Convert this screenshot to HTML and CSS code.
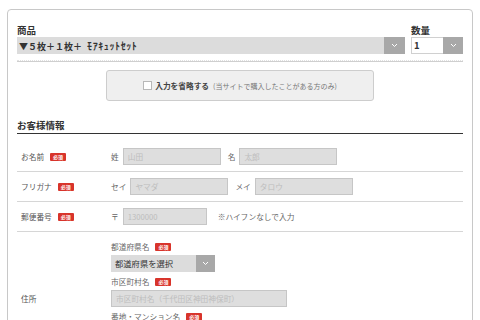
FILE: index.html
```html
<!DOCTYPE html>
<html lang="ja">
<head>
    <meta charset="utf-8">
    <title>ご注文フォーム</title>
    <link rel="stylesheet" href="styles.css">
</head>
<body>
    <div class="order-form">
        <!-- 商品・数量 -->
        <div class="item-row">
            <div class="item-col">
                <div class="field-title">商品</div>
                <div class="select-box">
                    <span class="select-text">▼５枚＋１枚＋ <span class="kana">ﾓｱｷｭｯﾄｾｯﾄ</span></span>
                    <span class="select-arrow">
                        <svg width="7" height="5" viewBox="0 0 7 5"><polyline points="1,1 3.5,3.5 6,1" fill="none" stroke="#fff" stroke-width="1"/></svg>
                    </span>
                </div>
            </div>
            <div class="qty-col">
                <div class="field-title">数量</div>
                <div class="select-box qty-box">
                    <span class="select-text">1</span>
                    <span class="select-arrow">
                        <svg width="7" height="5" viewBox="0 0 7 5"><polyline points="1,1 3.5,3.5 6,1" fill="none" stroke="#fff" stroke-width="1"/></svg>
                    </span>
                </div>
            </div>
        </div>
        <div class="item-rule"></div>

        <!-- 入力省略 -->
        <div class="skip-button">
            <span class="checkbox"></span>
            <span class="skip-text">入力を省略する</span>
            <span class="skip-note">(当サイトで購入したことがある方のみ)</span>
        </div>

        <!-- お客様情報 -->
        <h2 class="section-title">お客様情報</h2>

        <div class="form-row">
            <div class="row-label">お名前<span class="req">必須</span></div>
            <div class="row-fields">
                <span class="pair"><span class="mini-label">姓</span><input class="text-input" placeholder="山田"></span>
                <span class="pair"><span class="mini-label">名</span><input class="text-input" placeholder="太郎"></span>
            </div>
        </div>

        <div class="form-row">
            <div class="row-label">フリガナ<span class="req">必須</span></div>
            <div class="row-fields">
                <span class="pair"><span class="mini-label">セイ</span><input class="text-input" placeholder="ヤマダ"></span>
                <span class="pair"><span class="mini-label">メイ</span><input class="text-input" placeholder="タロウ"></span>
            </div>
        </div>

        <div class="form-row">
            <div class="row-label">郵便番号<span class="req">必須</span></div>
            <div class="row-fields">
                <span class="pair"><span class="mini-label">〒</span><input class="text-input zip-input" placeholder="1300000"></span>
                <span class="hint">※ハイフンなしで入力</span>
            </div>
        </div>

        <div class="form-row address-row">
            <div class="row-label">住所</div>
            <div class="address-fields">
                <div class="sub-field">
                    <div class="sub-label">都道府県名<span class="req">必須</span></div>
                    <div class="select-box pref-box">
                        <span class="select-text">都道府県を選択</span>
                        <span class="select-arrow">
                            <svg width="7" height="5" viewBox="0 0 7 5"><polyline points="1,1 3.5,3.5 6,1" fill="none" stroke="#fff" stroke-width="1"/></svg>
                        </span>
                    </div>
                </div>
                <div class="sub-field">
                    <div class="sub-label">市区町村名<span class="req">必須</span></div>
                    <input class="text-input city-input" placeholder="市区町村名（千代田区神田神保町）">
                </div>
                <div class="sub-field">
                    <div class="sub-label">番地・マンション名<span class="req">必須</span></div>
                    <input class="text-input city-input" placeholder="番地・マンション名">
                </div>
            </div>
        </div>
    </div>
</body>
</html>
```

FILE: styles.css
```css
/* Reset */
* {
    margin: 0;
    padding: 0;
    box-sizing: border-box;
}
body {
    font-family: "Noto Sans CJK JP", "Noto Sans", sans-serif;
    color: #555;
    background: #fff;
    overflow: hidden;
}
.order-form {
    margin: 9px 7px 0;
    border: 1px solid #c8c8c8;
    border-radius: 4px;
    padding: 14px 9px 40px;
}

/* 商品・数量 */
.item-row {
    display: flex;
    gap: 6px;
}
.item-col {
    flex: 1;
}
.qty-col {
    width: 52px;
}
.field-title {
    font-size: 9.5px;
    font-weight: bold;
    color: #333;
    line-height: 12px;
    margin-bottom: 1px;
}
.select-box {
    display: flex;
    height: 17px;
    background: #dcdcdc;
}
.select-text {
    flex: 1;
    font-size: 9px;
    font-weight: bold;
    color: #333;
    line-height: 17px;
    padding-left: 2px;
    white-space: nowrap;
}
.kana {
    margin-left: 3px;
    font-size: 10px;
    letter-spacing: 0.6px;
}
.select-arrow {
    width: 21px;
    background: #a8a8a8;
    display: flex;
    align-items: center;
    justify-content: center;
}
.qty-box {
    background: #fff;
    border: 1px solid #d0d0d0;
    border-right: none;
}
.qty-box .select-text {
    line-height: 15px;
    padding-left: 2px;
    font-size: 9.5px;
}
.qty-box .select-arrow {
    width: 20px;
    margin: -1px 0;
}
.item-rule {
    margin-top: 6px;
    height: 2px;
    border-top: 1px dotted #e2e2e2;
    border-bottom: 1px solid #cfcfcf;
}

/* 入力省略ボタン */
.skip-button {
    margin: 8px auto 0;
    width: 268px;
    height: 31px;
    background: #efefef;
    border: 1px solid #cdcdcd;
    border-radius: 3px;
    display: flex;
    align-items: center;
    justify-content: center;
}
.checkbox {
    width: 9px;
    height: 9px;
    background: #fff;
    border: 1px solid #b8b8b8;
    margin-right: 3px;
}
.skip-text {
    font-size: 7.7px;
    font-weight: bold;
    color: #444;
}
.skip-note {
    font-size: 7px;
    color: #777;
    margin-left: 4px;
}

/* お客様情報 */
.section-title {
    margin-top: 18px;
    font-size: 9.5px;
    font-weight: bold;
    color: #333;
    line-height: 12px;
    padding-bottom: 2px;
    border-bottom: 1px solid #333;
    margin-bottom: 8px;
}
.form-row {
    display: flex;
    align-items: center;
    padding: 6px 0;
    border-bottom: 1px solid #d6d6d6;
}
.row-label {
    width: 94px;
    padding-left: 4px;
    font-size: 7.7px;
    color: #555;
    display: flex;
    align-items: center;
}
.req {
    display: inline-block;
    width: 16px;
    height: 8px;
    margin-left: 6px;
    background: #d8342b;
    color: #fff;
    font-size: 5px;
    font-weight: bold;
    line-height: 8px;
    text-align: center;
    border-radius: 1px;
}
.row-fields {
    display: flex;
    align-items: center;
    gap: 7px;
}
.pair {
    display: flex;
    align-items: center;
    gap: 4px;
}
.mini-label {
    font-size: 7.7px;
    color: #666;
}
.text-input {
    display: block;
    width: 98px;
    height: 17px;
    background: #dedede;
    border: 1px solid #c6c6c6;
    padding-left: 4px;
    font-family: inherit;
    font-size: 7.7px;
    color: #333;
    outline: none;
}
.text-input::placeholder {
    color: #bdbdbd;
}
.zip-input {
    width: 84px;
}
.hint {
    margin-left: 4px;
    font-size: 7.7px;
    color: #666;
}

/* 住所 */
.address-row {
    padding: 9px 0 24px;
}
.address-row .row-label {
    padding-top: 14px;
}
.address-fields {
    display: flex;
    flex-direction: column;
    gap: 4px;
}
.sub-label {
    font-size: 7.7px;
    color: #666;
    line-height: 11px;
    margin-bottom: 3px;
    display: flex;
    align-items: center;
}
.pref-box {
    width: 104px;
}
.pref-box .select-text {
    font-size: 8.3px;
    font-weight: normal;
    padding-left: 4px;
}
.pref-box .select-arrow {
    width: 19px;
}
.city-input {
    width: 176px;
}
```
